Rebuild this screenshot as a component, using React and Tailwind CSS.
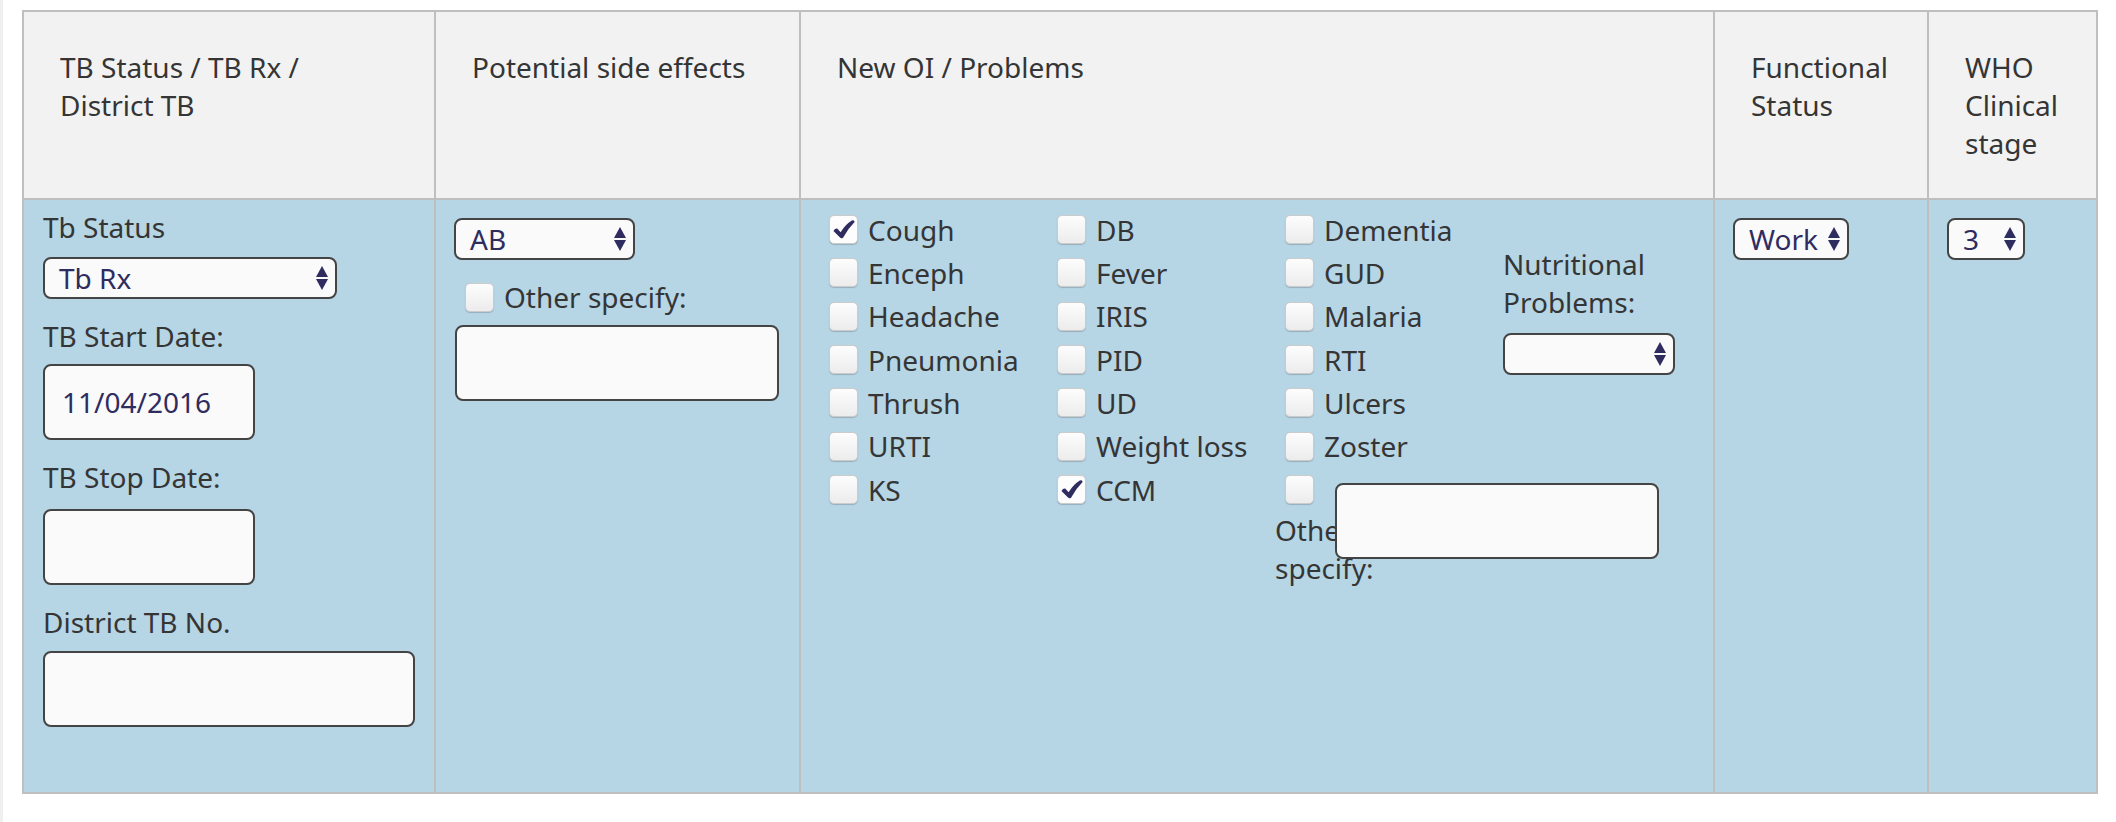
import React from "react";

const NAVY = "#2f2c60";

function Arrows() {
  return (
    <svg width="12" height="24" viewBox="0 0 12 24" className="shrink-0">
      <path d="M6 0L12 11H0Z" fill={NAVY} />
      <path d="M0 13H12L6 24Z" fill={NAVY} />
    </svg>
  );
}

function Select({ value, className }) {
  return (
    <div
      className={`flex items-center justify-between h-[42px] rounded-[8px] border-2 border-[#444444] bg-[#fafafa] pl-[14px] pr-[7px] text-[#2f2c60] leading-[38px] ${className}`}
    >
      <span className="whitespace-nowrap">{value}</span>
      <Arrows />
    </div>
  );
}

function TextBox({ value, className }) {
  return (
    <div
      className={`flex items-center h-[76px] rounded-[8px] border-2 border-[#444444] bg-[#fafafa] pl-[17px] text-[#2f2c60] leading-[38px] ${className}`}
    >
      {value}
    </div>
  );
}

function Check() {
  return (
    <svg width="22" height="19" viewBox="0 0 22 19">
      <path
        d="M0.5 11 Q2 8.2 4.2 8.6 L7.6 12.2 Q12.5 4.5 18.8 0.6 Q21.4 -0.4 21.6 2 Q15 8.6 10.2 17.4 Q8.6 19.2 7 17.6 Z"
        fill={NAVY}
      />
    </svg>
  );
}

function Box({ checked }) {
  return (
    <div
      className={`w-[29px] h-[29px] shrink-0 rounded-[5px] border border-[#cbcbcb] shadow-[0_1px_1px_rgba(0,0,0,0.18)] flex items-center justify-center ${
        checked ? "bg-[#fdfdfd]" : "bg-gradient-to-b from-[#fdfdfd] to-[#ececec]"
      }`}
    >
      {checked ? <Check /> : null}
    </div>
  );
}

function Item({ label, checked }) {
  return (
    <div className="h-[43.33px] flex items-center pl-[10px] gap-[10px]">
      <Box checked={checked} />
      {label ? <span className="leading-[38px] whitespace-nowrap">{label}</span> : null}
    </div>
  );
}

const colA = [
  ["Cough", true],
  ["Enceph"],
  ["Headache"],
  ["Pneumonia"],
  ["Thrush"],
  ["URTI"],
  ["KS"],
];
const colB = [
  ["DB"],
  ["Fever"],
  ["IRIS"],
  ["PID"],
  ["UD"],
  ["Weight loss"],
  ["CCM", true],
];
const colC = [
  ["Dementia"],
  ["GUD"],
  ["Malaria"],
  ["RTI"],
  ["Ulcers"],
  ["Zoster"],
  [""],
];

export default function App() {
  return (
    <div className="flex w-[2116px] h-[822px] bg-white font-['Noto_Sans','Open_Sans',sans-serif] text-[28px] text-[#353535]">
      <div className="w-[3px] h-full bg-[#efefef]" />
      <div className="ml-[19px] mt-[10px] self-start w-[2076px] border-2 border-[#bfbfbf] grid grid-cols-[410px_365px_914px_214px_169px]">
        {/* Header */}
        <div className="h-[188px] border-b-2 border-[#bfbfbf] bg-[#f2f2f2] pl-[36px] pt-[36px] leading-[38px] whitespace-nowrap">
          TB Status / TB Rx /<br />
          District TB
        </div>
        <div className="h-[188px] border-b-2 border-l-2 border-[#bfbfbf] bg-[#f2f2f2] pl-[36px] pt-[36px] leading-[38px] whitespace-nowrap">
          Potential side effects
        </div>
        <div className="h-[188px] border-b-2 border-l-2 border-[#bfbfbf] bg-[#f2f2f2] pl-[36px] pt-[36px] leading-[38px] whitespace-nowrap">
          New OI / Problems
        </div>
        <div className="h-[188px] border-b-2 border-l-2 border-[#bfbfbf] bg-[#f2f2f2] pl-[36px] pt-[36px] leading-[38px] whitespace-nowrap">
          Functional
          <br />
          Status
        </div>
        <div className="h-[188px] border-b-2 border-l-2 border-[#bfbfbf] bg-[#f2f2f2] pl-[36px] pt-[36px] leading-[38px] whitespace-nowrap">
          WHO
          <br />
          Clinical
          <br />
          stage
        </div>

        {/* Body */}
        <div className="h-[592px] bg-[#b6d5e5] pl-[19px] pr-[19px] pt-[8px] flex flex-col items-start">
          <div className="leading-[38px]">Tb Status</div>
          <Select value="Tb Rx" className="mt-[11px] w-[294px]" />
          <div className="leading-[38px] mt-[18px]">TB Start Date:</div>
          <TextBox value="11/04/2016" className="mt-[9px] w-[212px]" />
          <div className="leading-[38px] mt-[18px]">TB Stop Date:</div>
          <TextBox value="" className="mt-[13px] w-[212px]" />
          <div className="leading-[38px] mt-[18px]">District TB No.</div>
          <TextBox value="" className="mt-[10px] w-[372px]" />
        </div>

        <div className="h-[592px] border-l-2 border-[#bfbfbf] bg-[#b6d5e5] pl-[18px] pt-[18px] flex flex-col items-start">
          <Select value="AB" className="w-[181px]" />
          <div className="mt-[18px] h-[38px] flex items-center pl-[11px] gap-[10px]">
            <Box />
            <span className="leading-[38px] whitespace-nowrap">Other specify:</span>
          </div>
          <TextBox value="" className="mt-[9px] ml-[1px] w-[324px]" />
        </div>

        <div className="h-[592px] border-l-2 border-[#bfbfbf] bg-[#b6d5e5] pl-[18px] pt-[8px] flex items-start">
          <div className="w-[228px]">
            {colA.map(([l, c]) => (
              <Item key={l} label={l} checked={c} />
            ))}
          </div>
          <div className="w-[228px]">
            {colB.map(([l, c]) => (
              <Item key={l} label={l} checked={c} />
            ))}
          </div>
          <div className="w-[228px] relative">
            {colC.map(([l, c], i) => (
              <Item key={i} label={l} checked={c} />
            ))}
            <div className="leading-[38px]">
              Other
              <br />
              specify:
            </div>
            <TextBox value="" className="absolute left-[60px] top-[275px] w-[324px]" />
          </div>
          <div className="pt-[37px] flex flex-col items-start">
            <div className="leading-[38px] whitespace-nowrap">
              Nutritional
              <br />
              Problems:
            </div>
            <Select value="" className="mt-[12px] w-[172px]" />
          </div>
        </div>

        <div className="h-[592px] border-l-2 border-[#bfbfbf] bg-[#b6d5e5] pl-[18px] pt-[18px] flex flex-col items-start">
          <Select value="Work" className="w-[116px]" />
        </div>

        <div className="h-[592px] border-l-2 border-[#bfbfbf] bg-[#b6d5e5] pl-[18px] pt-[18px] flex flex-col items-start">
          <Select value="3" className="w-[78px]" />
        </div>
      </div>
    </div>
  );
}
